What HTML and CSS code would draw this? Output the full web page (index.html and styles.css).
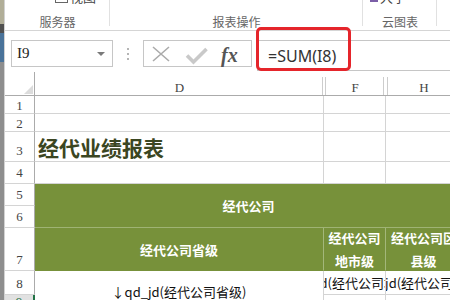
FILE: index.html
```html
<!DOCTYPE html>
<html lang="zh-CN">
<head>
    <meta charset="UTF-8">
    <title>经代业绩报表</title>
    <link rel="stylesheet" href="styles.css">
</head>
<body>
    <div class="edge"></div>

    <div class="app">
        <div class="ribbon">
            <div class="group g1">
                <div class="peek peek-view"><span class="view-ico"></span>视图</div>
                <div class="glabel">服务器</div>
            </div>
            <div class="group g2">
                <div class="peek"></div>
                <div class="glabel">报表操作</div>
            </div>
            <div class="group g3">
                <div class="peek peek-cloud"><span class="cloud-ico"></span>大字</div>
                <div class="glabel">云图表</div>
            </div>
            <div class="group g4"></div>
        </div>

        <div class="fbar">
            <div class="namebox">I9<span class="caret"></span></div>
            <div class="grip"><i></i><i></i><i></i></div>
            <div class="fbtns">
                <svg class="fb-ico" width="70" height="25" viewBox="0 0 70 25">
                    <path d="M9 6 L25 20 M25 6 L9 20" stroke="#ababab" stroke-width="1.6" fill="none"/>
                    <path d="M43 14.5 L49.5 21 L62.5 8" stroke="#c9c9c9" stroke-width="3.6" fill="none"/>
                </svg>
                <span class="fx">fx</span>
            </div>
            <div class="finput">=SUM(I8)</div>
        </div>

        <div class="sheet">
            <!-- column headers -->
            <div class="corner">
                <svg width="9" height="9" viewBox="0 0 9 9"><path d="M0 9 L9 0 L9 9 Z" fill="#dcdcdc"/></svg>
            </div>
            <div class="ch ch-d">D</div>
            <div class="ch ch-f">F</div>
            <div class="ch ch-h">H</div>

            <!-- rows 1-4 -->
            <div class="rh short">1</div><div class="c"></div><div class="c"></div><div class="c"></div>
            <div class="rh short">2</div><div class="c"></div><div class="c"></div><div class="c"></div>
            <div class="rh">3</div><div class="c title">经代业绩报表</div><div class="c"></div><div class="c"></div>
            <div class="rh">4</div><div class="c"></div><div class="c"></div><div class="c"></div>

            <!-- green header block -->
            <div class="rh r5">5</div>
            <div class="c g g-top">经代公司</div>
            <div class="rh r6">6</div>
            <div class="rh r7">7</div>
            <div class="c g">经代公司省级</div>
            <div class="c g wrap">经代公司<br>地市级</div>
            <div class="c g wrap">经代公司区<br>县级</div>

            <!-- data -->
            <div class="rh r8">8</div>
            <div class="c d8">↓qd_jd(经代公司省级)</div>
            <div class="c">↓ds_jd(经代公司地市级)</div>
            <div class="c">↓xq_jd(经代公司区县级)</div>
            <div class="rh r9 sel">9</div>
            <div class="c"></div>
            <div class="c"></div>
        </div>
    </div>

    <div class="mark"></div>
</body>
</html>
```

FILE: styles.css
```css
* {
    margin: 0;
    padding: 0;
    box-sizing: border-box;
}

body {
    width: 450px;
    height: 300px;
    overflow: hidden;
    display: flex;
    position: relative;
    background: #fff;
    font-family: "Noto Sans CJK SC", sans-serif;
}

/* window behind, on the left */
.edge {
    width: 5px;
    flex: none;
    background: linear-gradient(to bottom, #b1ae98 0 24px, #505050 24px 33px, #4a739a 33px 62px, #8e8e8e 62px);
    box-shadow: inset -1px 0 #d2d2d2;
}

.app {
    flex: 1;
    min-width: 0;
    display: flex;
    flex-direction: column;
    overflow: hidden;
}

/* ribbon */
.ribbon {
    height: 31px;
    border-bottom: 1px solid #d5d5d5;
    display: flex;
    overflow: hidden;
}

.group {
    flex: none;
    height: 30px;
    display: flex;
    flex-direction: column;
    justify-content: space-between;
    align-items: center;
    background: linear-gradient(#e1e1e1, #e1e1e1) right top / 1px 26px no-repeat;
}

.g1 { width: 105px; }
.g2 { width: 253px; }
.g3 { width: 74px; }
.g4 { flex: 1; background: none; }

.glabel {
    font-size: 12px;
    line-height: 14px;
    color: #666;
    margin-bottom: 1px;
}

.peek {
    margin-top: -10px;
    height: 14px;
    line-height: 14px;
    font-size: 13px;
    color: #444;
    display: flex;
    align-items: center;
    gap: 2px;
}

.peek-view {
    align-self: flex-start;
    margin-left: 50px;
}

.view-ico {
    width: 13px;
    height: 12px;
    border: 1px solid #666;
}

.peek-cloud {
    align-self: flex-start;
    margin-left: 7px;
}

.cloud-ico {
    width: 8px;
    height: 9px;
    background: #7b5ea7;
}

/* formula bar */
.fbar {
    height: 41px;
    display: flex;
    align-items: flex-start;
    padding-top: 9px;
}

.namebox {
    margin-left: 6px;
    width: 102px;
    height: 27px;
    border: 1px solid #c6c6c6;
    display: flex;
    align-items: center;
    padding-left: 5px;
    font-family: "Liberation Serif", serif;
    font-size: 15px;
    color: #222;
}

.caret {
    margin-left: auto;
    margin-right: 7px;
    border-left: 4px solid transparent;
    border-right: 4px solid transparent;
    border-top: 4px solid #7a7a7a;
}

.grip {
    width: 30px;
    height: 27px;
    display: flex;
    flex-direction: column;
    align-items: center;
    justify-content: center;
    gap: 3px;
}

.grip i {
    width: 2px;
    height: 2px;
    background: #b5b5b5;
}

.fbtns {
    width: 109px;
    height: 27px;
    border: 1px solid #c6c6c6;
    display: flex;
    align-items: center;
}

.fb-ico {
    flex: none;
}

.fx {
    margin-left: 7px;
    font-family: "Liberation Serif", serif;
    font-style: italic;
    font-weight: bold;
    font-size: 20px;
    color: #555;
    line-height: 20px;
    margin-top: 2px;
}

.finput {
    flex: 1;
    margin-left: 5px;
    height: 31px;
    border: 1px solid #c6c6c6;
    border-right: none;
    padding-left: 10px;
    display: flex;
    align-items: center;
    font-family: "Noto Sans", sans-serif;
    font-size: 16px;
    color: #333;
}

/* annotation */
.mark {
    position: absolute;
    left: 256px;
    top: 27px;
    width: 95px;
    height: 44px;
    border: 3px solid #e5252b;
    border-radius: 5px;
}

/* sheet */
.sheet {
    flex: 1;
    overflow: hidden;
    display: grid;
    grid-template-columns: 30px 289px 62px 76px;
    grid-template-rows: 24px 18px 18px 30px 22px 22px 22px 43px 24px 18px;
}

.corner {
    border-right: 1px solid #ababab;
    border-bottom: 1px solid #ababab;
    display: flex;
    align-items: flex-end;
    justify-content: flex-end;
    padding: 0 1px 1px 0;
}

.ch {
    border-bottom: 1px solid #ababab;
    display: flex;
    align-items: flex-end;
    justify-content: center;
    font-family: "Liberation Serif", serif;
    font-size: 13px;
    line-height: 14px;
    color: #444;
}

.ch-d {
    background: linear-gradient(#cdcdcd, #cdcdcd) right 1px bottom / 1px 18px no-repeat;
}

.ch-f {
    background:
        linear-gradient(#cdcdcd, #cdcdcd) left 1px bottom / 1px 18px no-repeat,
        linear-gradient(#cdcdcd, #cdcdcd) right 2px bottom / 1px 18px no-repeat;
}

.ch-h {
    background: linear-gradient(#cdcdcd, #cdcdcd) left 1px bottom / 1px 18px no-repeat;
}

.rh {
    grid-column: 1;
    border-right: 1px solid #ababab;
    border-bottom: 1px solid #d4d4d4;
    display: flex;
    align-items: flex-end;
    justify-content: center;
    padding-bottom: 3px;
    font-family: "Liberation Serif", serif;
    font-size: 13px;
    line-height: 14px;
    color: #444;
}

.rh.short {
    padding-bottom: 0;
}

.r5 { grid-row: 6; }
.r6 { grid-row: 7; }
.r7 { grid-row: 8; }
.r8 { grid-row: 9; }
.r9 { grid-row: 10; }

.rh.sel {
    background: #e1e1e1;
    border-right: 2px solid #217346;
    color: #217346;
}

.c {
    border-right: 1px solid #d4d4d4;
    border-bottom: 1px solid #d4d4d4;
    overflow: hidden;
    white-space: nowrap;
    display: flex;
    align-items: center;
    justify-content: center;
    font-size: 13px;
    color: #111;
}

.title {
    justify-content: flex-start;
    padding-left: 3px;
    font-size: 21px;
    font-weight: bold;
    color: #3b4622;
}

.g {
    background: #77913a;
    color: #fff;
    font-weight: bold;
    border-right-color: #a3b77a;
    border-bottom-color: #77913a;
}

.g-top {
    grid-column: 2 / 5;
    grid-row: 6 / 8;
    border-right: none;
    border-bottom-color: #9fb374;
}

.wrap {
    white-space: nowrap;
    text-align: center;
    line-height: 23px;
}

.d8 {
    grid-column: 2;
    grid-row: 9 / 11;
}
```
